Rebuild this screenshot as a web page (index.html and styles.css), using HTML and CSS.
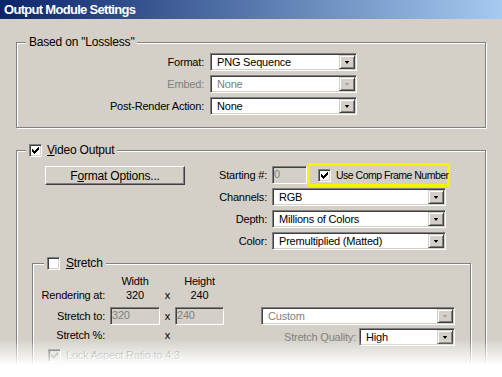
FILE: index.html
```html
<!DOCTYPE html>
<html lang="en">
<head>
    <meta charset="UTF-8">
    <title>Output Module Settings</title>
    <link rel="stylesheet" href="styles.css">
</head>
<body>
<div class="window">
    <div class="titlebar">Output Module Settings</div>

    <div class="content">
        <div class="group">
            <div class="group-title">Based on "Lossless"</div>
            <div class="form-rows">
                <span class="field-label">Format:</span>
                <div class="select"><span class="select-text">PNG Sequence</span><span class="select-btn"></span></div>

                <span class="field-label disabled">Embed:</span>
                <div class="select disabled"><span class="select-text">None</span><span class="select-btn"></span></div>

                <span class="field-label">Post-Render Action:</span>
                <div class="select"><span class="select-text">None</span><span class="select-btn"></span></div>
            </div>
        </div>

        <div class="group group-video">
            <div class="group-title">
                <span class="check"><svg width="11" height="11" viewBox="0 0 11 11"><path d="M2 4h1v3H2z M3 5h1v3H3z M4 6h1v3H4z M5 5h1v3H5z M6 4h1v3H6z M7 3h1v3H7z M8 2h1v3H8z"/></svg></span>
                <span><u>V</u>ideo Output</span>
            </div>

            <div class="video-top">
                <div class="video-left">
                    <button class="btn">F<u>o</u>rmat Options...</button>
                </div>
                <div class="video-fields">
                    <span class="field-label">Starting #:</span>
                    <div class="start-row">
                        <span class="input disabled start-input">0</span>
                        <span class="highlight">
                            <span class="check"><svg width="11" height="11" viewBox="0 0 11 11"><path d="M2 4h1v3H2z M3 5h1v3H3z M4 6h1v3H4z M5 5h1v3H5z M6 4h1v3H6z M7 3h1v3H7z M8 2h1v3H8z"/></svg></span>
                            <span class="highlight-text">Use Comp Frame Number</span>
                        </span>
                    </div>

                    <span class="field-label">Channels:</span>
                    <div class="select"><span class="select-text">RGB</span><span class="select-btn"></span></div>

                    <span class="field-label">Depth:</span>
                    <div class="select"><span class="select-text">Millions of Colors</span><span class="select-btn"></span></div>

                    <span class="field-label">Color:</span>
                    <div class="select"><span class="select-text">Premultiplied (Matted)</span><span class="select-btn"></span></div>
                </div>
            </div>

            <div class="group group-stretch">
                <div class="group-title">
                    <span class="check"></span>
                    <span><u>S</u>tretch</span>
                </div>

                <div class="stretch-grid">
                    <span class="c-w center">Width</span>
                    <span class="c-h center">Height</span>

                    <span class="c-l">Rendering at:</span>
                    <span class="c-w center">320</span>
                    <span class="c-x center">x</span>
                    <span class="c-h center">240</span>

                    <span class="c-l tall">Stretch to:</span>
                    <span class="c-w input disabled">320</span>
                    <span class="c-x center tall">x</span>
                    <span class="c-h input disabled">240</span>
                    <div class="c-r select disabled"><span class="select-text">Custom</span><span class="select-btn"></span></div>

                    <span class="c-l tall pct">Stretch %:</span>
                    <span class="c-x center tall pct">x</span>
                    <div class="c-r quality">
                        <span class="disabled">Stretch Quality:</span>
                        <div class="select quality-select"><span class="select-text">High</span><span class="select-btn"></span></div>
                    </div>

                    <div class="c-all lock">
                        <span class="check disabled"><svg width="11" height="11" viewBox="0 0 11 11"><path d="M2 4h1v3H2z M3 5h1v3H3z M4 6h1v3H4z M5 5h1v3H5z M6 4h1v3H6z M7 3h1v3H7z M8 2h1v3H8z"/></svg></span>
                        <span class="disabled">Lock Aspect Ratio to 4:3</span>
                    </div>
                </div>
            </div>
        </div>
    </div>

    <div class="fade"></div>
</div>
</body>
</html>
```

FILE: styles.css
```css
body {
    margin: 0;
    font-family: "Liberation Sans", Arial, sans-serif;
    font-size: 11px;
    letter-spacing: -0.2px;
    color: #000;
    background: #fff;
}
.window {
    position: relative;
    width: 502px;
    height: 377px;
    overflow: hidden;
    background: #d4d0c8;
}
.titlebar {
    height: 19px;
    line-height: 19px;
    padding-left: 4px;
    color: #fff;
    font-weight: bold;
    font-size: 13px;
    letter-spacing: -0.7px;
    background: linear-gradient(to right, #0a246a, #a6caf0);
}
.content {
    padding: 23px 16px 0 16px;
}

/* etched group boxes */
.group {
    position: relative;
    border: 1px solid #808080;
    box-shadow: 1px 1px 0 #fff, inset 1px 1px 0 #fff;
}
.group-title {
    position: absolute;
    top: -8px;
    left: 9px;
    padding: 0 3px;
    display: flex;
    align-items: center;
    gap: 5px;
    height: 14px;
    font-size: 12px;
    background: #d4d0c8;
    white-space: nowrap;
}
.group-video {
    margin-top: 22px;
}
.group-stretch {
    margin: 13px 14px 0 15px;
    padding: 10px 0 30px;
}
.group-stretch .group-title {
    left: 11px;
    gap: 6px;
}

.form-rows {
    display: grid;
    grid-template-columns: 187px 147px;
    grid-auto-rows: 18px;
    column-gap: 6px;
    row-gap: 4px;
    align-items: center;
    padding: 10px 0 12px;
}
.field-label {
    text-align: right;
    white-space: nowrap;
    line-height: 14px;
}
.disabled {
    color: #808080;
}

/* sunken combo box */
.select {
    display: flex;
    align-items: center;
    height: 18px;
    box-sizing: border-box;
    padding: 1px;
    border: 1px solid;
    border-color: #808080 #fff #fff #808080;
    box-shadow: inset 1px 1px 0 #404040, inset -1px -1px 0 #d4d0c8;
    background: #fff;
}
.select-text {
    flex: 1;
    padding-left: 5px;
    line-height: 14px;
    white-space: nowrap;
    overflow: hidden;
}
.select-btn {
    width: 16px;
    height: 14px;
    box-sizing: border-box;
    display: flex;
    align-items: center;
    justify-content: center;
    background: #d4d0c8;
    border: 1px solid;
    border-color: #d4d0c8 #404040 #404040 #d4d0c8;
    box-shadow: inset 1px 1px 0 #fff, inset -1px -1px 0 #808080;
}
.select-btn::after {
    content: "";
    width: 5px;
    height: 3px;
    background: #000;
    clip-path: polygon(0 0, 100% 0, 60% 100%, 40% 100%);
}
.select.disabled .select-btn::after {
    background: #a0a0a0;
}

.input {
    height: 18px;
    box-sizing: border-box;
    padding-left: 1px;
    line-height: 14px;
    border: 1px solid;
    border-color: #808080 #fff #fff #808080;
    box-shadow: inset 1px 1px 0 #404040, inset -1px -1px 0 #d4d0c8;
    background: #d4d0c8;
}

.check {
    position: relative;
    display: inline-block;
    flex: none;
    width: 13px;
    height: 13px;
    box-sizing: border-box;
    border: 1px solid;
    border-color: #808080 #fff #fff #808080;
    box-shadow: inset 1px 1px 0 #404040, inset -1px -1px 0 #d4d0c8;
    background: #fff;
}
.check svg {
    position: absolute;
    left: 0;
    top: 0;
    fill: #000;
}
.check.disabled {
    background: #d4d0c8;
}
.check.disabled svg {
    fill: #808080;
}

.btn {
    width: 140px;
    height: 19px;
    box-sizing: border-box;
    padding: 0;
    font-family: "Liberation Sans", Arial, sans-serif;
    font-size: 12px;
    letter-spacing: -0.2px;
    line-height: 16px;
    color: #000;
    background: #d4d0c8;
    border: 1px solid;
    border-color: #fff #404040 #404040 #fff;
    box-shadow: inset -1px -1px 0 #808080;
}

.video-top {
    display: flex;
    padding-top: 15px;
}
.video-left {
    padding-left: 28px;
}
.video-fields {
    margin-left: 22px;
    display: grid;
    grid-template-columns: 60px 174px;
    grid-auto-rows: 18px;
    column-gap: 5px;
    row-gap: 4px;
    align-items: center;
}
.start-row {
    display: flex;
    align-items: center;
    height: 18px;
    white-space: nowrap;
}
.start-input {
    width: 35px;
    flex: none;
}
.highlight {
    display: flex;
    align-items: center;
    gap: 5px;
    height: 24px;
    width: 143px;
    box-sizing: border-box;
    margin: -3px 0;
    padding-left: 8px;
    border: 3px solid #f4f400;
    border-radius: 3px;
}
.highlight-text {
    font-size: 10.5px;
    letter-spacing: -0.5px;
}

.stretch-grid {
    display: grid;
    grid-template-columns: 77px 50px 15px 49px 37px 194px;
    grid-template-rows: 14px 14px 23px 21px 16px;
    align-items: end;
    line-height: 14px;
    white-space: nowrap;
}
.c-l {
    grid-column: 1;
    text-align: right;
    padding-right: 5px;
}
.c-w { grid-column: 2; }
.c-x { grid-column: 3; }
.c-h { grid-column: 4; }
.c-r { grid-column: 6; }
.c-all { grid-column: 1 / -1; }
.center {
    text-align: center;
}
.tall {
    line-height: 18px;
}
.pct {
    padding-bottom: 2px;
}
.quality {
    display: flex;
    align-items: center;
    justify-content: flex-end;
    gap: 3px;
}
.quality-select {
    width: 96px;
}
.lock {
    display: flex;
    align-items: center;
    gap: 5px;
    padding-left: 15px;
    text-shadow: 1px 1px 0 #fff;
}

.fade {
    position: absolute;
    left: 0;
    right: 0;
    bottom: 0;
    height: 38px;
    background: linear-gradient(to bottom, rgba(255, 255, 255, 0), #fff 70%);
}
```
